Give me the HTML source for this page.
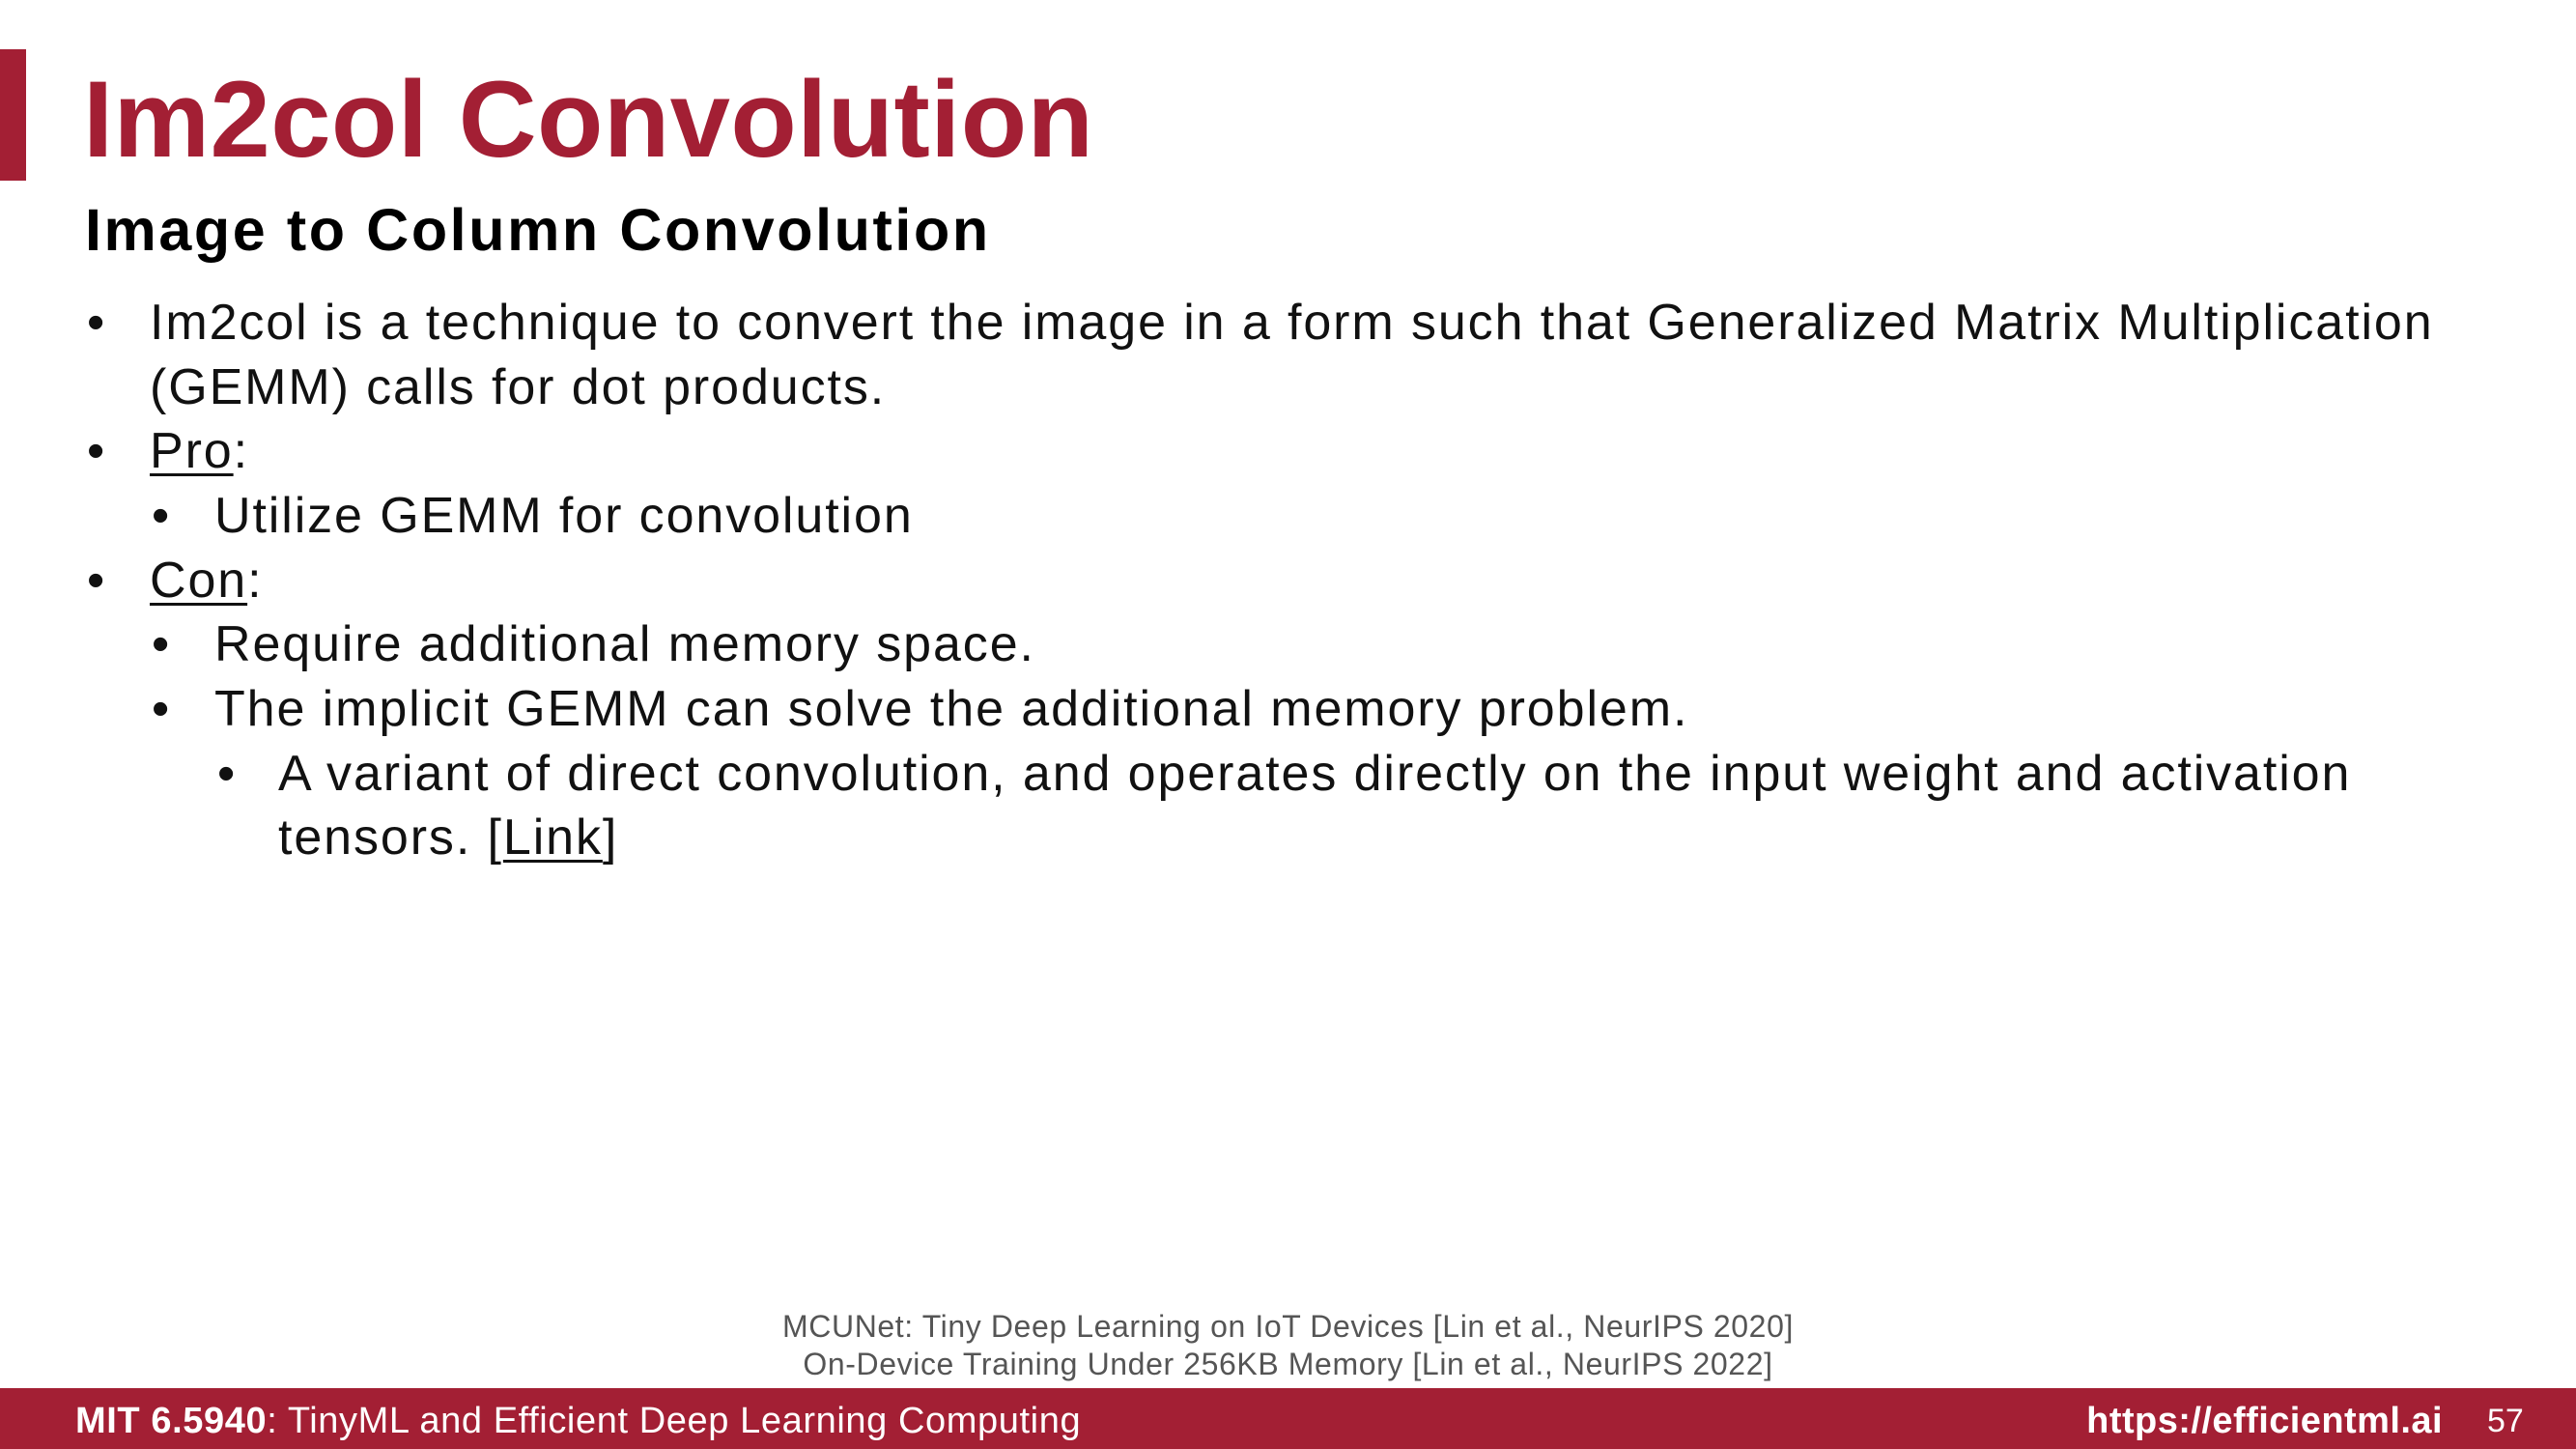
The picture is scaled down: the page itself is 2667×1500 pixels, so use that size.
<!DOCTYPE html>
<html><head><meta charset="utf-8"><style>
body{margin:0;width:2667px;height:1500px;position:relative;background:#fff;overflow:hidden;font-family:"Liberation Sans",Arial,sans-serif;}
div{position:absolute;line-height:1;white-space:nowrap;}
.t{font-size:52px;color:#111;letter-spacing:1.9px;top:0;}
u{text-decoration-thickness:3px;text-underline-offset:6px;}
</style></head><body>
<div style="left:0;top:51px;width:27px;height:136px;background:#a31f34"></div>
<div style="left:86px;top:68px;font-size:112px;font-weight:bold;color:#a31f34;letter-spacing:0.4px">Im2col Convolution</div>
<div style="left:88px;top:208px;font-size:61px;font-weight:bold;color:#000;letter-spacing:2.6px">Image to Column Convolution</div>

<div class="t" style="left:90px;top:308px">•</div>
<div class="t" style="left:155px;top:308px">Im2col is a technique to convert the image in a form such that Generalized Matrix Multiplication</div>
<div class="t" style="left:155px;top:375px">(GEMM) calls for dot products.</div>
<div class="t" style="left:90px;top:441px">•</div>
<div class="t" style="left:155px;top:441px"><u>Pro</u>:</div>
<div class="t" style="left:157px;top:508px">•</div>
<div class="t" style="left:222px;top:508px">Utilize GEMM for convolution</div>
<div class="t" style="left:90px;top:575px">•</div>
<div class="t" style="left:155px;top:575px"><u>Con</u>:</div>
<div class="t" style="left:157px;top:641px">•</div>
<div class="t" style="left:222px;top:641px">Require additional memory space.</div>
<div class="t" style="left:157px;top:708px">•</div>
<div class="t" style="left:222px;top:708px">The implicit GEMM can solve the additional memory problem.</div>
<div class="t" style="left:225px;top:775px">•</div>
<div class="t" style="left:288px;top:775px">A variant of direct convolution, and operates directly on the input weight and activation</div>
<div class="t" style="left:288px;top:841px">tensors. [<u>Link</u>]</div>

<div style="left:0;width:2667px;text-align:center;top:1357px;font-size:32px;color:#555;letter-spacing:0.6px">MCUNet: Tiny Deep Learning on IoT Devices [Lin et al., NeurIPS 2020]</div>
<div style="left:0;width:2667px;text-align:center;top:1396px;font-size:32px;color:#555;letter-spacing:0.6px">On-Device Training Under 256KB Memory [Lin et al., NeurIPS 2022]</div>

<div style="left:0;top:1437px;width:2667px;height:63px;background:#a31f34"></div>
<div style="left:78px;top:1452px;font-size:38px;color:#fff;letter-spacing:0.6px"><b>MIT 6.5940</b>: TinyML and Efficient Deep Learning Computing</div>
<div style="right:138px;top:1452px;font-size:38px;color:#fff;font-weight:bold;letter-spacing:0.45px">https://efficientml.ai</div>
<div style="left:2575px;top:1454px;font-size:34px;color:#fff">57</div>
</body></html>
